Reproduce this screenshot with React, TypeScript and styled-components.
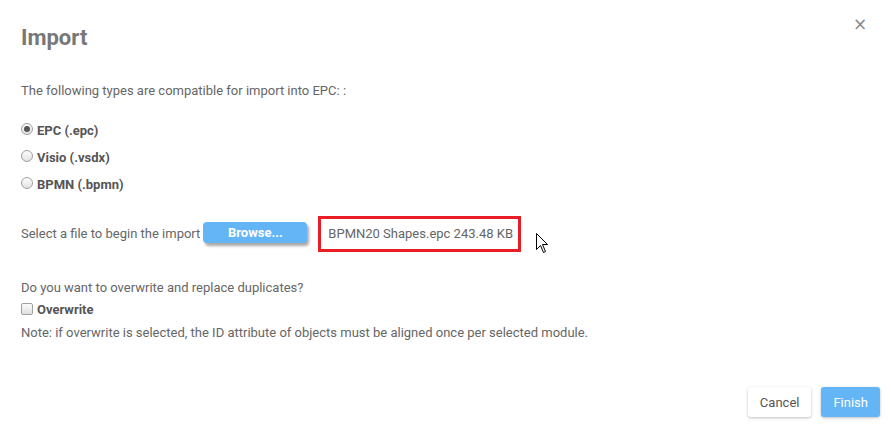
import React from "react";
import styled, { createGlobalStyle } from "styled-components";

const Global = createGlobalStyle`
  html, body { margin: 0; padding: 0; background: #fff; }
  body { font-family: Roboto, "Liberation Sans", Arial, sans-serif; color: #666; }
  * { box-sizing: border-box; }
`;

const Dialog = styled.div`
  position: relative;
  width: 891px;
  height: 430px;
  padding: 24px 11px 0 21px;
  display: flex;
  flex-direction: column;
`;

const Title = styled.h1`
  margin: 0;
  font-size: 22px;
  font-weight: 700;
  color: #777;
  line-height: 28px;
`;

const Close = styled.button`
  position: absolute;
  top: 14px;
  right: 23px;
  border: none;
  background: none;
  padding: 0;
  width: 16px;
  height: 20px;
  font-size: 17px;
  color: #888;
  cursor: pointer;
  font-family: "DejaVu Sans", sans-serif;
`;

const Text = styled.p<{ $mt?: number }>`
  margin: ${(p) => p.$mt ?? 0}px 0 0 0;
  font-size: 13px;
  line-height: 16px;
  color: #666;
`;

const OptionList = styled.div`
  margin-top: 24px;
  display: flex;
  flex-direction: column;
  gap: 11px;
`;

const Option = styled.label<{ $mt?: number }>`
  display: flex;
  align-items: center;
  gap: 4px;
  margin-top: ${(p) => p.$mt ?? 0}px;
  font-size: 13px;
  font-weight: 700;
  color: #555;
  line-height: 16px;
`;

const Radio = styled.span<{ $checked?: boolean }>`
  width: 12px;
  height: 12px;
  border-radius: 50%;
  border: 1px solid #a0a0a0;
  background: linear-gradient(#fcfcfc, #e2e2e2);
  display: inline-flex;
  align-items: center;
  justify-content: center;
  margin-top: -4px;
  &::after {
    content: "";
    width: 6px;
    height: 6px;
    border-radius: 50%;
    background: ${(p) => (p.$checked ? "#555" : "transparent")};
  }
`;

const Box = styled.span`
  width: 12px;
  height: 12px;
  border-radius: 2px;
  border: 1px solid #a0a0a0;
  background: linear-gradient(#fcfcfc, #dedede);
  margin-top: -3px;
`;

const FileRow = styled.div`
  margin-top: 20px;
  display: flex;
  align-items: center;
  font-size: 13px;
  color: #666;
`;

const BrowseButton = styled.button`
  margin-left: 3px;
  width: 104px;
  height: 21px;
  border: none;
  border-radius: 4px;
  background: #64b5f6;
  color: #fff;
  font-family: Roboto, "Liberation Sans", sans-serif;
  font-size: 13px;
  font-weight: 700;
  box-shadow: 2px 3px 3px rgba(0, 0, 0, 0.35);
  margin-top: -2px;
`;

const FileName = styled.div`
  margin-left: 11px;
  width: 203px;
  height: 36px;
  border: 3px solid #e81d25;
  display: flex;
  align-items: center;
  padding-left: 7px;
  font-size: 13px;
  color: #666;
`;

const Cursor = styled.svg`
  margin-left: 15px;
  margin-top: 20px;
`;

const Footer = styled.div`
  margin-top: auto;
  margin-bottom: 13px;
  display: flex;
  justify-content: flex-end;
  gap: 10px;
`;

const FooterButton = styled.button<{ $primary?: boolean }>`
  height: 30px;
  padding: 0 12px;
  border: none;
  border-radius: 3px;
  font-family: Roboto, "Liberation Sans", sans-serif;
  font-size: 13px;
  background: ${(p) => (p.$primary ? "#64b5f6" : "#fff")};
  color: ${(p) => (p.$primary ? "#fff" : "#555")};
  box-shadow: 0 1px 3px rgba(0, 0, 0, 0.25);
`;

export default function App() {
  return (
    <>
      <Global />
      <Dialog>
        <Close aria-label="close">×</Close>
        <Title>Import</Title>
        <Text $mt={31}>The following types are compatible for import into EPC: :</Text>
        <OptionList>
          <Option>
            <Radio $checked />
            EPC (.epc)
          </Option>
          <Option>
            <Radio />
            Visio (.vsdx)
          </Option>
          <Option>
            <Radio />
            BPMN (.bpmn)
          </Option>
        </OptionList>
        <FileRow>
          <span>Select a file to begin the import</span>
          <BrowseButton>Browse...</BrowseButton>
          <FileName>BPMN20 Shapes.epc 243.48 KB</FileName>
          <Cursor width="13" height="21" viewBox="0 0 13 21">
            <path
              d="M0.5 0.5 L0.5 16.5 L4.5 12.5 L7.5 19.5 L9.5 18.5 L6.5 11.5 L11.5 11.5 Z"
              fill="#fff"
              stroke="#000"
              strokeWidth="1"
            />
          </Cursor>
        </FileRow>
        <Text $mt={26}>Do you want to overwrite and replace duplicates?</Text>
        <Option $mt={6}>
          <Box />
          Overwrite
        </Option>
        <Text $mt={7}>
          Note: if overwrite is selected, the ID attribute of objects must be aligned once per selected module.
        </Text>
        <Footer>
          <FooterButton>Cancel</FooterButton>
          <FooterButton $primary>Finish</FooterButton>
        </Footer>
      </Dialog>
    </>
  );
}
